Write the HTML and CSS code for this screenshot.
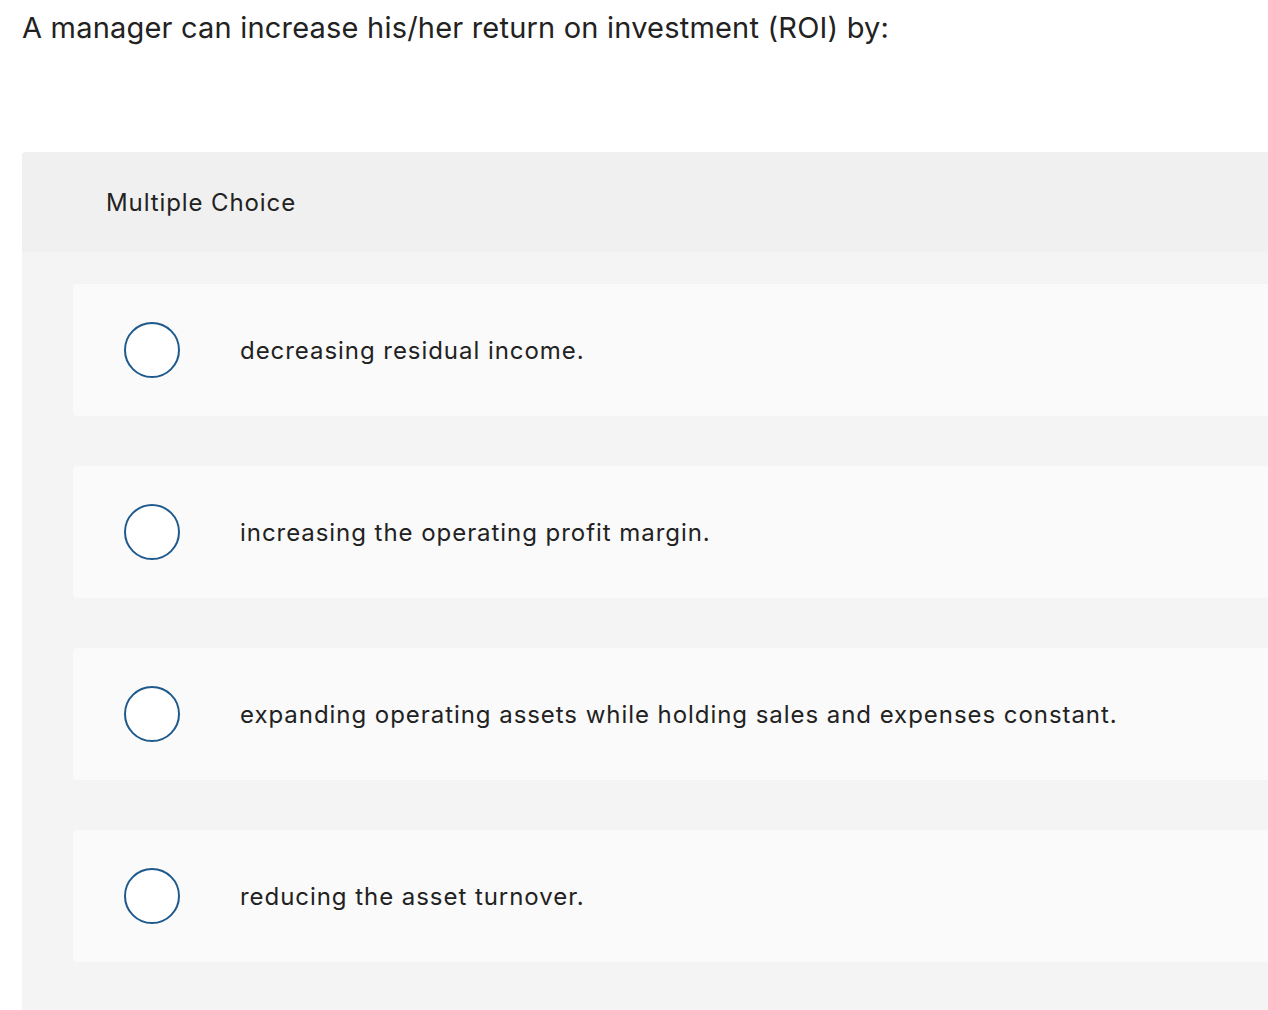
FILE: index.html
```html
<!DOCTYPE html>
<html>
<head>
<meta charset="utf-8">
<link rel="stylesheet" href="styles.css">
</head>
<body>
<div class="page">
  <h1 class="question">A manager can increase his/her return on investment (ROI) by:</h1>
  <section class="panel">
    <div class="panel-head">Multiple Choice</div>
    <div class="panel-body">
      <div class="option"><span class="radio"></span><span class="label">decreasing residual income.</span></div>
      <div class="option"><span class="radio"></span><span class="label">increasing the operating profit margin.</span></div>
      <div class="option"><span class="radio"></span><span class="label">expanding operating assets while holding sales and expenses constant.</span></div>
      <div class="option"><span class="radio"></span><span class="label">reducing the asset turnover.</span></div>
    </div>
  </section>
</div>
</body>
</html>
```
FILE: styles.css
```css
html, body {
  margin: 0;
  padding: 0;
  background: #fff;
  overflow: hidden;
}
body {
  font-family: "Inter", "Liberation Sans", sans-serif;
  color: #222;
  font-variant-ligatures: none;
}
.page {
  width: 1320px;
  padding-left: 22px;
}
.question {
  margin: 0;
  padding-top: 8px;
  height: 144px;
  font-size: 29px;
  font-weight: 400;
  letter-spacing: 0.2px;
  line-height: 40px;
  color: #222;
}
.panel {
  background: #f4f4f4;
  border-top-left-radius: 4px;
  padding-bottom: 50px;
}
.panel-head {
  background: #f0f0f0;
  border-top-left-radius: 4px;
  height: 100px;
  padding-left: 84px;
  display: flex;
  align-items: center;
  font-size: 24px;
  letter-spacing: 0.9px;
  color: #222;
}
.panel-body {
  padding: 32px 0 0 51px;
  display: flex;
  flex-direction: column;
  gap: 50px;
}
.option {
  background: #fafafa;
  border-radius: 4px 0 0 4px;
  height: 132px;
  display: flex;
  align-items: center;
  padding-left: 51px;
}
.radio {
  width: 52px;
  height: 52px;
  border: 2px solid #1f5a8c;
  border-radius: 50%;
  background: #fff;
  flex: none;
}
.label {
  margin-left: 60px;
  font-size: 24px;
  letter-spacing: 0.95px;
  color: #222;
}
```
